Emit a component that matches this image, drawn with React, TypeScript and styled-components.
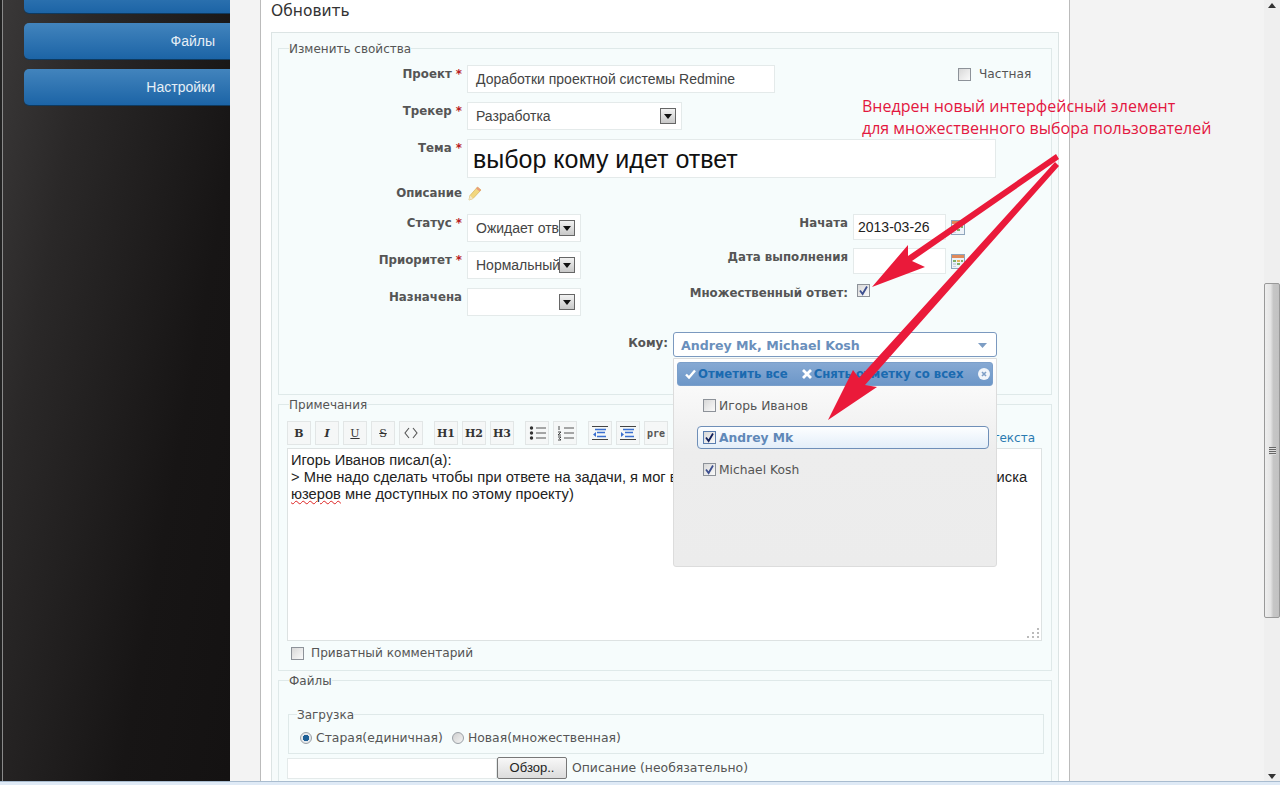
import React from "react"
import styled, { createGlobalStyle } from "styled-components"

const VERDANA = `"DejaVu Sans", Verdana, sans-serif`
const ARIAL = `"Liberation Sans", Arial, sans-serif`

const GlobalStyle = createGlobalStyle`
    html, body {
        margin: 0;
        padding: 0;
        height: 100%;
        overflow: hidden;
    }
    * {
        box-sizing: border-box;
    }
`

const CheckBox = ({ checked, strong }: { checked?: boolean; strong?: boolean }) => (
    <CheckFrame $strong={strong}>
        {checked && (
            <svg width="11" height="11" viewBox="0 0 11 11">
                <path d="M2 5.5 L4.6 9 L9 1.5" fill="none" stroke={strong ? "#10205c" : "#3d4f8f"} strokeWidth="1.8" />
            </svg>
        )}
    </CheckFrame>
)

const SelectArrow = () => (
    <ArrowButton>
        <svg width="8" height="5" viewBox="0 0 8 5">
            <path d="M0 0 H8 L4 5 Z" fill="#111" />
        </svg>
    </ArrowButton>
)

const Calendar = () => (
    <CalendarIcon width="14" height="15" viewBox="0 0 14 15">
        <rect x="0.5" y="0.5" width="13" height="14" fill="#eef3f8" stroke="#8fa6bd" />
        <rect x="1" y="1" width="12" height="3" fill="#e08a5a" />
        <rect x="2" y="6" width="3" height="2" fill="#7fb069" />
        <rect x="6" y="6" width="3" height="2" fill="#e6b35c" />
        <rect x="10" y="6" width="2" height="2" fill="#7fb069" />
        <rect x="2" y="9" width="3" height="2" fill="#c9d6e3" />
        <rect x="6" y="9" width="3" height="2" fill="#7fb069" />
        <rect x="2" y="12" width="3" height="1" fill="#c9d6e3" />
    </CalendarIcon>
)

const Pencil = () => (
    <svg width="15" height="15" viewBox="0 0 15 15">
        <path d="M10.5 1 L14 4 L6 12.5 L2 14 L3 9.5 Z" fill="#f2d77e" stroke="#d8b765" strokeWidth="0.8" />
        <path d="M10.5 1 L14 4 L12.6 5.6 L9 2.6 Z" fill="#ea9c7c" />
        <path d="M3 9.5 L2 14 L6 12.5 Z" fill="#f4e7c9" />
    </svg>
)

const LinesIcon = ({ kind }: { kind: "ul" | "ol" | "left" | "right" }) => {
    if (kind === "ul" || kind === "ol") {
        return (
            <svg width="17" height="16" viewBox="0 0 17 16">
                <path d="M7 3 H17 M7 8 H17 M7 13 H17" stroke="#555" strokeWidth="1" />
                {kind === "ul" ? (
                    <>
                        <circle cx="2.5" cy="3" r="1.7" fill="#333" />
                        <circle cx="2.5" cy="8" r="1.7" fill="#333" />
                        <circle cx="2.5" cy="13" r="1.7" fill="#333" />
                    </>
                ) : (
                    <path d="M2 1 V5 M1 7 H4 L1 10 H4 M1 12 H4 L2.5 13.5 L4 15 H1" fill="none" stroke="#333" strokeWidth="0.9" />
                )}
            </svg>
        )
    }
    return (
        <svg width="16" height="16" viewBox="0 0 16 16">
            <path d="M0 1.5 H16 M0 14.5 H16" stroke="#444" strokeWidth="1" />
            <path d="M3 4.5 H14 M5 7.5 H13 M5 11.5 H14" stroke="#3a6fd0" strokeWidth="1.4" />
            {kind === "left" ? <path d="M1 7 L4 9.5 L1 12 Z" fill="#3a6fd0" /> : <path d="M4 7 L1 9.5 L4 12 Z" fill="#3a6fd0" />}
        </svg>
    )
}

const App = () => {
    return (
        <Page>
            <GlobalStyle />
            <Workspace>
                <Sidebar>
                    <NavButton></NavButton>
                    <NavButton>Файлы</NavButton>
                    <NavButton>Настройки</NavButton>
                </Sidebar>
                <Main>
                    <Column>
                        <Title>Обновить</Title>
                        <FormBox>
                            <PropsFieldset>
                                <Legend $inset={10}>Изменить свойства</Legend>
                                <Stack>
                                    <Row>
                                        <FieldLabel>Проект <Req>*</Req></FieldLabel>
                                        <TextField $width={308} $height={28}>Доработки проектной системы Redmine</TextField>
                                        <PrivateFlag>
                                            <CheckBox />
                                            <span>Частная</span>
                                        </PrivateFlag>
                                    </Row>
                                    <Row>
                                        <FieldLabel>Трекер <Req>*</Req></FieldLabel>
                                        <SelectField $width={215}>
                                            <SelectText>Разработка</SelectText>
                                            <SelectArrow />
                                        </SelectField>
                                    </Row>
                                    <Row>
                                        <FieldLabel>Тема <Req>*</Req></FieldLabel>
                                        <SubjectField>выбор кому идет ответ</SubjectField>
                                    </Row>
                                    <DescriptionRow>
                                        <DescriptionLabel>Описание</DescriptionLabel>
                                        <Pencil />
                                    </DescriptionRow>
                                    <Columns>
                                        <Stack>
                                            <Row>
                                                <FieldLabel>Статус <Req>*</Req></FieldLabel>
                                                <SelectField $width={114}>
                                                    <SelectText>Ожидает ответа</SelectText>
                                                    <SelectArrow />
                                                </SelectField>
                                            </Row>
                                            <Row>
                                                <FieldLabel>Приоритет <Req>*</Req></FieldLabel>
                                                <SelectField $width={114}>
                                                    <SelectText>Нормальный</SelectText>
                                                    <SelectArrow />
                                                </SelectField>
                                            </Row>
                                            <Row>
                                                <FieldLabel>Назначена</FieldLabel>
                                                <SelectField $width={114}>
                                                    <SelectText></SelectText>
                                                    <SelectArrow />
                                                </SelectField>
                                            </Row>
                                        </Stack>
                                        <DatesStack>
                                            <Row>
                                                <DateLabel>Начата</DateLabel>
                                                <DateField>2013-03-26</DateField>
                                                <Calendar />
                                            </Row>
                                            <Row>
                                                <DateLabel>Дата выполнения</DateLabel>
                                                <DateField></DateField>
                                                <Calendar />
                                            </Row>
                                            <MultiRow>
                                                <DateLabel>Множественный ответ:</DateLabel>
                                                <MultiCheck>
                                                    <CheckBox checked />
                                                </MultiCheck>
                                            </MultiRow>
                                        </DatesStack>
                                    </Columns>
                                    <RecipientRow>
                                        <RecipientLabel>Кому:</RecipientLabel>
                                        <RecipientSelect>
                                            <RecipientTrigger>
                                                <span>Andrey Mk, Michael Kosh</span>
                                                <svg width="9" height="5" viewBox="0 0 9 5">
                                                    <path d="M0 0 H9 L4.5 5 Z" fill="#7d9dc4" />
                                                </svg>
                                            </RecipientTrigger>
                                            <Dropdown>
                                                <DropdownHeader>
                                                    <HeaderAction>
                                                        <svg width="11" height="10" viewBox="0 0 11 10">
                                                            <path d="M1 5.5 L4 8.5 L10 1.5" fill="none" stroke="#fff" strokeWidth="2.4" />
                                                        </svg>
                                                        Отметить все
                                                    </HeaderAction>
                                                    <HeaderAction>
                                                        <svg width="10" height="10" viewBox="0 0 10 10">
                                                            <path d="M1 1 L9 9 M9 1 L1 9" stroke="#fff" strokeWidth="2.8" />
                                                        </svg>
                                                        Снять отметку со всех
                                                    </HeaderAction>
                                                    <HeaderClose>
                                                        <svg width="12" height="12" viewBox="0 0 12 12">
                                                            <circle cx="6" cy="6" r="6" fill="#f1f5fa" />
                                                            <path d="M4 4 L8 8 M8 4 L4 8" stroke="#7f9fc6" strokeWidth="1.6" />
                                                        </svg>
                                                    </HeaderClose>
                                                </DropdownHeader>
                                                <DropdownList>
                                                    <DropdownItem>
                                                        <CheckBox />
                                                        Игорь Иванов
                                                    </DropdownItem>
                                                    <DropdownItem $active>
                                                        <CheckBox checked strong />
                                                        Andrey Mk
                                                    </DropdownItem>
                                                    <DropdownItem>
                                                        <CheckBox checked />
                                                        Michael Kosh
                                                    </DropdownItem>
                                                </DropdownList>
                                            </Dropdown>
                                        </RecipientSelect>
                                    </RecipientRow>
                                </Stack>
                            </PropsFieldset>
                            <NotesFieldset>
                                <Legend $inset={2}>Примечания</Legend>
                                <Toolbar>
                                    <ToolGroup>
                                        <ToolButton $bold>B</ToolButton>
                                        <ToolButton $italic>I</ToolButton>
                                        <ToolButton $underline>U</ToolButton>
                                        <ToolButton $strike>S</ToolButton>
                                        <ToolButton>
                                            <svg width="14" height="12" viewBox="0 0 14 12">
                                                <path d="M5 1 L1 6 L5 11 M9 1 L13 6 L9 11" fill="none" stroke="#555" strokeWidth="1.1" />
                                            </svg>
                                        </ToolButton>
                                    </ToolGroup>
                                    <ToolGroup>
                                        <ToolButton $bold>H1</ToolButton>
                                        <ToolButton $bold>H2</ToolButton>
                                        <ToolButton $bold>H3</ToolButton>
                                    </ToolGroup>
                                    <ToolGroup>
                                        <ToolButton><LinesIcon kind="ul" /></ToolButton>
                                        <ToolButton><LinesIcon kind="ol" /></ToolButton>
                                    </ToolGroup>
                                    <ToolGroup>
                                        <ToolButton><LinesIcon kind="right" /></ToolButton>
                                        <ToolButton><LinesIcon kind="left" /></ToolButton>
                                        <PreButton>pre</PreButton>
                                    </ToolGroup>
                                    <FormatLink>Форматирование текста</FormatLink>
                                </Toolbar>
                                <Editor>
                                    Игорь Иванов писал(а):<br />
                                    &gt; Мне надо сделать чтобы при ответе на задачи, я мог выбирать кому именно он идет, из их общего списка<br />
                                    <Misspelled>юзеров</Misspelled> мне доступных по этому проекту)
                                    <Grip width="13" height="11" viewBox="0 0 13 11">
                                        <path d="M10 1 h2 v2 h-2 Z M5 5 h2 v2 h-2 Z M10 5 h2 v2 h-2 Z M0 9 h2 v2 h-2 Z M5 9 h2 v2 h-2 Z M10 9 h2 v2 h-2 Z" fill="#bbb" />
                                    </Grip>
                                </Editor>
                                <PrivateComment>
                                    <CheckBox />
                                    <span>Приватный комментарий</span>
                                </PrivateComment>
                            </NotesFieldset>
                            <FilesFieldset>
                                <Legend $inset={2}>Файлы</Legend>
                                <UploadFieldset>
                                    <Legend $inset={8}>Загрузка</Legend>
                                    <RadioRow>
                                        <Radio $checked />
                                        <span>Старая(единичная)</span>
                                        <SecondRadio />
                                        <span>Новая(множественная)</span>
                                    </RadioRow>
                                </UploadFieldset>
                                <FileRow>
                                    <FileInput />
                                    <BrowseButton>Обзор..</BrowseButton>
                                    <span>Описание (необязательно)</span>
                                </FileRow>
                            </FilesFieldset>
                        </FormBox>
                    </Column>
                </Main>
                <Scrollbar>
                    <ScrollArrow>
                        <svg width="8" height="5" viewBox="0 0 8 5"><path d="M4 0 L8 5 H0 Z" fill="#333" /></svg>
                    </ScrollArrow>
                    <ScrollTrack>
                        <ScrollThumb>
                            <ThumbGrip />
                        </ScrollThumb>
                    </ScrollTrack>
                    <ScrollArrow>
                        <svg width="8" height="5" viewBox="0 0 8 5"><path d="M0 0 H8 L4 5 Z" fill="#333" /></svg>
                    </ScrollArrow>
                </Scrollbar>
            </Workspace>
            <StatusBar />
            <Annotation>
                Внедрен новый интерфейсный элемент<br />
                для множественного выбора пользователей
            </Annotation>
            <Arrows width="1280" height="785" viewBox="0 0 1280 785">
                <path d="M1056 154 L1059 159 L912 261 L925 267 L872 287 L908 245 L908 256 Z" fill="#ea1a3a" />
                <path d="M1055 162 L1059 166 L865 385 L877 387 L828 420 L853 370 L859 378 Z" fill="#ea1a3a" />
            </Arrows>
        </Page>
    )
}

const Page = styled.div`
    position: relative;
    width: 1280px;
    height: 785px;
    display: flex;
    flex-direction: column;
    overflow: hidden;
    font-family: ${VERDANA};
    font-size: 12px;
    color: #555;
`

const Workspace = styled.div`
    flex: 1;
    min-height: 0;
    display: flex;
`

const Sidebar = styled.nav`
    width: 230px;
    flex: none;
    padding-left: 24px;
    background: linear-gradient(100deg, #3a3838 0%, #2a2828 25%, #171515 70%, #141212 100%);
    border-left: 2px solid #222;
    box-shadow: inset 1px 0 0 #8a8a8a;
    display: flex;
    flex-direction: column;
    gap: 10px;
`

const NavButton = styled.div`
    height: 36px;
    margin-left: -2px;
    padding-right: 15px;
    display: flex;
    align-items: center;
    justify-content: flex-end;
    border-radius: 5px 0 0 5px;
    background: linear-gradient(#4284bd, #1c64a6);
    box-shadow: 0 1px 0 #0e3a60;
    font-family: ${ARIAL};
    font-size: 14px;
    color: #e6eff6;

    &:first-child {
        margin-top: -23px;
    }
`

const Main = styled.main`
    flex: 1;
    min-width: 0;
    padding-left: 30px;
    background: #f3f3f3;
`

const Column = styled.div`
    width: 810px;
    height: 100%;
    background: #fff;
    border-left: 1px solid #bbb;
    border-right: 1px solid #bbb;
    padding: 0 10px;
`

const Title = styled.h2`
    margin: 0;
    height: 32px;
    padding-top: 2px;
    font-size: 15.5px;
    line-height: 18px;
    font-weight: 400;
    color: #333;
`

const FormBox = styled.div`
    height: 760px;
    border: 1px solid #dce4e4;
    padding: 8px 6px;
    background: #f6fbfb;
`

const Fieldset = styled.fieldset`
    margin: 0;
    min-width: 0;
    border: 1px solid #dfe9e9;
    background: #f6fcfc;
`

const Legend = styled.legend<{ $inset: number }>`
    margin-left: ${p => p.$inset}px;
    padding: 1px 0 0;
    font-size: 12px;
    line-height: 14px;
    color: #555;
`

const PropsFieldset = styled(Fieldset)`
    padding: 9px 0 37px;
`

const NotesFieldset = styled(Fieldset)`
    margin-top: 2px;
    padding: 9px 9px 10px 8px;
`

const FilesFieldset = styled(Fieldset)`
    margin-top: 2px;
    padding: 19px 7px 20px 8px;
`

const Stack = styled.div`
    display: flex;
    flex-direction: column;
    gap: 9px;
`

const Row = styled.div`
    display: flex;
    align-items: flex-start;
`

const FieldLabel = styled.label`
    width: 183px;
    margin-right: 5px;
    padding-top: 2px;
    flex: none;
    text-align: right;
    font-size: 11.8px;
    font-weight: 700;
    line-height: 14px;
    color: #555;
`

const Req = styled.span`
    color: #b81c24;
`

const TextField = styled.div<{ $width: number; $height: number }>`
    width: ${p => p.$width}px;
    height: ${p => p.$height}px;
    padding-left: 8px;
    flex: none;
    display: flex;
    align-items: center;
    background: #fff;
    border: 1px solid #e4eaea;
    font-family: ${ARIAL};
    font-size: 14px;
    white-space: nowrap;
    color: #444;
`

const PrivateFlag = styled.div`
    margin-left: 183px;
    padding-top: 2px;
    display: flex;
    align-items: center;
    gap: 8px;
    font-size: 12.2px;
    line-height: 14px;
    color: #555;
`

const SelectField = styled.div<{ $width: number }>`
    width: ${p => p.$width}px;
    height: 28px;
    padding: 0 5px 0 8px;
    flex: none;
    display: flex;
    align-items: center;
    background: #fff;
    border: 1px solid #e4eaea;
    font-family: ${ARIAL};
    font-size: 14px;
    color: #444;
`

const SelectText = styled.span`
    flex: 1;
    min-width: 0;
    overflow: hidden;
    white-space: nowrap;
`

const ArrowButton = styled.span`
    width: 16px;
    height: 16px;
    flex: none;
    display: flex;
    align-items: center;
    justify-content: center;
    border: 1px solid #666;
    background: linear-gradient(#f2f2f2, #c8c8c8);
`

const SubjectField = styled.div`
    width: 529px;
    height: 39px;
    padding: 1px 5px 0;
    display: flex;
    align-items: center;
    background: #fff;
    border: 1px solid #e4eaea;
    font-family: ${ARIAL};
    font-size: 25px;
    color: #111;
`

const DescriptionRow = styled.div`
    height: 18px;
    margin: -3px 0 3px;
    display: flex;
    align-items: center;
`

const DescriptionLabel = styled(FieldLabel)`
    padding-top: 0;
`

const Columns = styled.div`
    display: flex;
    align-items: flex-start;
`

const DatesStack = styled.div`
    display: flex;
    flex-direction: column;
    gap: 8px;
`

const DateLabel = styled.label`
    width: 267px;
    margin-right: 5px;
    padding-top: 2px;
    flex: none;
    text-align: right;
    font-size: 11.8px;
    font-weight: 700;
    line-height: 14px;
    color: #555;
`

const DateField = styled.div`
    width: 93px;
    height: 26px;
    padding-left: 4px;
    flex: none;
    display: flex;
    align-items: center;
    background: #fff;
    border: 1px solid #e4eaea;
    font-family: ${ARIAL};
    font-size: 14px;
    color: #222;
`

const CalendarIcon = styled.svg`
    margin: 6px 0 0 5px;
    flex: none;
`

const MultiRow = styled(Row)`
    margin-top: 2px;
`

const MultiCheck = styled.span`
    margin-left: 4px;
    display: flex;
`

const RecipientRow = styled.div`
    margin-top: 7px;
    display: flex;
    align-items: flex-start;
`

const RecipientLabel = styled.label`
    width: 389px;
    margin-right: 5px;
    padding-top: 4px;
    flex: none;
    text-align: right;
    font-size: 11.8px;
    font-weight: 700;
    line-height: 14px;
    color: #555;
`

const RecipientSelect = styled.div`
    position: relative;
    width: 324px;
`

const RecipientTrigger = styled.div`
    height: 25px;
    padding: 1px 9px 0 7px;
    display: flex;
    align-items: center;
    justify-content: space-between;
    background: #fff;
    border: 1px solid #7b99bf;
    border-radius: 3px;
    font-size: 12.6px;
    font-weight: 700;
    color: #6a8fbc;
`

const Dropdown = styled.div`
    position: absolute;
    z-index: 5;
    top: 26px;
    left: 0;
    width: 324px;
    height: 209px;
    padding: 3px;
    background: linear-gradient(#ffffff 0%, #ededed 45%, #ececec 100%);
    border: 1px solid #dcdcdc;
    border-radius: 0 0 3px 3px;
`

const DropdownHeader = styled.div`
    height: 24px;
    padding: 0 3px 0 7px;
    display: flex;
    align-items: center;
    gap: 14px;
    border-radius: 3px;
    background: linear-gradient(#86a9d3, #6d97c8);
    border: 1px solid #7b9fca;
`

const HeaderAction = styled.span`
    display: flex;
    align-items: center;
    gap: 2px;
    font-size: 11.7px;
    font-weight: 700;
    white-space: nowrap;
    color: #1a6ab0;
`

const HeaderClose = styled.span`
    margin-left: auto;
    display: flex;
`

const DropdownList = styled.ul`
    margin: 0;
    padding: 8px 4px 0 20px;
    list-style: none;
    display: flex;
    flex-direction: column;
    gap: 9px;
`

const DropdownItem = styled.li<{ $active?: boolean }>`
    height: 23px;
    padding-left: 5px;
    display: flex;
    align-items: center;
    gap: 3px;
    border: 1px solid ${p => (p.$active ? "#6f8fb8" : "transparent")};
    border-radius: 4px;
    background: ${p => (p.$active ? "linear-gradient(#fdfeff, #e3eef9)" : "transparent")};
    font-size: 12.3px;
    font-weight: ${p => (p.$active ? 700 : 400)};
    color: ${p => (p.$active ? "#5f88b8" : "#555")};
`

const CheckFrame = styled.span<{ $strong?: boolean }>`
    width: 13px;
    height: 13px;
    flex: none;
    display: inline-flex;
    align-items: center;
    justify-content: center;
    border: 1px solid ${p => (p.$strong ? "#5a7eb0" : "#8d9299")};
    background: linear-gradient(135deg, #d8d8d8, #fafafa);
`

const Toolbar = styled.div`
    position: relative;
    display: flex;
    gap: 11px;
`

const ToolGroup = styled.div`
    display: flex;
    gap: 4px;
`

const ToolButton = styled.span<{ $bold?: boolean; $italic?: boolean; $underline?: boolean; $strike?: boolean }>`
    width: 24px;
    height: 24px;
    display: flex;
    align-items: center;
    justify-content: center;
    background: #f5f7f7;
    border: 1px solid #e2e6e6;
    font-family: "DejaVu Serif", "Liberation Serif", serif;
    font-size: 11px;
    font-weight: ${p => (p.$bold || p.$italic ? 700 : 400)};
    font-style: ${p => (p.$italic ? "italic" : "normal")};
    text-decoration: ${p => (p.$underline ? "underline" : p.$strike ? "line-through" : "none")};
    color: #333;
`

const PreButton = styled(ToolButton)`
    font-family: "DejaVu Sans Mono", monospace;
    font-weight: 700;
    font-size: 10px;
    color: #555;
`

const FormatLink = styled.a`
    position: absolute;
    right: 7px;
    top: 10px;
    font-size: 12px;
    line-height: 14px;
    color: #2a7ab0;
`

const Editor = styled.div`
    position: relative;
    height: 193px;
    margin-top: 3px;
    padding: 3px;
    background: #fff;
    border: 1px solid #dde2e2;
    font-family: ${ARIAL};
    font-size: 14.7px;
    line-height: 17px;
    white-space: nowrap;
    color: #222;
`

const Misspelled = styled.span`
    text-decoration: underline wavy #d22;
    text-decoration-thickness: 1px;
`

const Grip = styled.svg`
    position: absolute;
    right: 1px;
    bottom: 2px;
`

const PrivateComment = styled.div`
    margin-top: 5px;
    padding-left: 4px;
    display: flex;
    align-items: center;
    gap: 7px;
    font-size: 12.15px;
    line-height: 14px;
`

const UploadFieldset = styled(Fieldset)`
    margin: 0 0 0 1px;
    height: 47px;
    padding: 9px 0 0;
`

const RadioRow = styled.div`
    padding-left: 11px;
    display: flex;
    align-items: center;
    gap: 4px;
    font-size: 12.4px;
    line-height: 14px;
`

const Radio = styled.span<{ $checked?: boolean }>`
    width: 12px;
    height: 12px;
    flex: none;
    border-radius: 50%;
    border: 1px solid #9aa0a6;
    background: ${p => (p.$checked ? "radial-gradient(circle, #1d5f96 0 3px, #e6e9ec 3.5px)" : "linear-gradient(135deg, #cfcfcf, #f4f4f4)")};
`

const SecondRadio = styled(Radio)`
    margin-left: 5px;
`

const FileRow = styled.div`
    margin-top: 3px;
    display: flex;
    align-items: center;
    gap: 5px;
    font-size: 12.4px;
    line-height: 14px;
`

const FileInput = styled.div`
    width: 210px;
    height: 21px;
    margin-right: -5px;
    background: #fff;
    border: 1px solid #e4eaea;
`

const BrowseButton = styled.span`
    width: 70px;
    height: 22px;
    display: flex;
    align-items: center;
    justify-content: center;
    background: linear-gradient(#f8f8f8, #dcdcdc);
    border: 1px solid #777;
    border-radius: 2px;
    font-family: ${ARIAL};
    font-size: 13px;
    color: #222;
`

const Scrollbar = styled.div`
    width: 16px;
    flex: none;
    display: flex;
    flex-direction: column;
    background: #efefef;
`

const ScrollArrow = styled.div`
    height: 10px;
    flex: none;
    display: flex;
    align-items: center;
    justify-content: center;
`

const ScrollTrack = styled.div`
    flex: 1;
    padding-top: 273px;
`

const ScrollThumb = styled.div`
    height: 335px;
    display: flex;
    align-items: center;
    justify-content: center;
    border: 1px solid #999;
    border-radius: 2px;
    background: linear-gradient(90deg, #eee 0%, #e4e4e4 40%, #c6c6c6 60%, #c2c2c2 100%);
`

const ThumbGrip = styled.span`
    width: 7px;
    height: 8px;
    background: repeating-linear-gradient(#666 0 1px, #ddd 1px 2px);
`

const StatusBar = styled.div`
    height: 4px;
    flex: none;
    background: #dfeaf6;
    border-top: 1px solid #a9bccf;
`

const Annotation = styled.div`
    position: absolute;
    z-index: 10;
    left: 862px;
    top: 95px;
    font-family: "Open Sans", sans-serif;
    font-size: 16px;
    line-height: 22px;
    white-space: nowrap;
    color: #e3173f;
`

const Arrows = styled.svg`
    position: absolute;
    z-index: 11;
    left: 0;
    top: 0;
    pointer-events: none;
`

export default App
